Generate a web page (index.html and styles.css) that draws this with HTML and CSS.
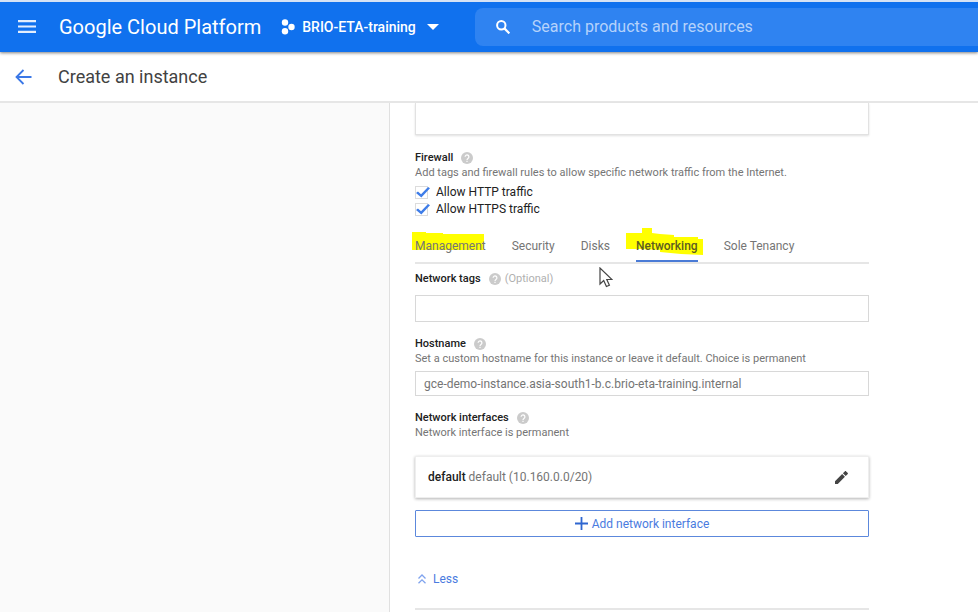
FILE: index.html
```
<!DOCTYPE html>
<html lang="en">
<head>
<meta charset="utf-8">
<meta name="viewport" content="width=device-width, initial-scale=1">
<title>Create an instance</title>
<link rel="stylesheet" href="styles.css">
</head>
<body>
<svg class="defs" aria-hidden="true">
  <symbol id="help" viewBox="0 0 24 24">
    <circle cx="12" cy="12" r="12" fill="#cbcbcb"/>
    <path d="M8.2 9.6a3.8 3.8 0 1 1 6 3.1c-1.400 1-2.200 1.500-2.200 3.100M12 17.400v2.400" fill="none" stroke="#fff" stroke-width="2.400"/>
  </symbol>
</svg>
<header class="topbar">
  <button class="icon-button menu" type="button" aria-label="Navigation menu">
    <svg width="20" height="14" viewBox="0 0 20 14"><path d="M1 1.200h18M1 6.500h18M1 11.800h18" stroke="#e3eefd" stroke-width="2.200"/></svg>
  </button>
  <a class="brand" href="#">Google Cloud Platform</a>
  <button class="project" type="button">
    <svg width="14" height="16" viewBox="0 0 14 16" fill="#fff"><circle cx="4" cy="3.500" r="3.200"/><circle cx="10.500" cy="8" r="3.200"/><circle cx="4" cy="12.300" r="3.200"/></svg>
    <span>BRIO-ETA-training</span>
    <svg class="caret" width="12" height="6" viewBox="0 0 12 6"><path d="M0 0h12L6 6z" fill="#fff"/></svg>
  </button>
  <form class="search">
    <svg width="14" height="14" viewBox="0 0 14 14" fill="none" stroke="#fff"><circle cx="5.300" cy="5.300" r="4.200" stroke-width="2"/><path d="M8.400 8.400l5 5" stroke-width="2.200"/></svg>
    <input type="search" aria-label="Search products and resources" placeholder="Search products and resources">
  </form>
</header>
<div class="titlebar">
  <button class="icon-button back" type="button" aria-label="Back">
    <svg width="17" height="16" viewBox="0 0 17 16" fill="none" stroke="#3b78e7" stroke-width="1.800"><path d="M16.500 8H1.500M8.500 1l-7 7 7 7"/></svg>
  </button>
  <h1>Create an instance</h1>
</div>
<div class="layout">
  <aside class="side"></aside>
  <main class="form">
    <div class="panel"></div>

    <section class="firewall">
      <h2>Firewall <svg class="help"><use href="#help"/></svg></h2>
      <p class="hint">Add tags and firewall rules to allow specific network traffic from the Internet.</p>
      <label class="check"><input type="checkbox" checked><span>Allow HTTP traffic</span></label>
      <label class="check"><input type="checkbox" checked><span>Allow HTTPS traffic</span></label>
    </section>

    <nav class="tabs">
      <a href="#">
        <svg class="mark mark-left" width="72" height="20" viewBox="0 0 72 20"><path d="M0 0h14v1h17v1h41v16H0z" fill="#ff0"/></svg>
        <span>Management</span>
      </a>
      <a href="#"><span>Security</span></a>
      <a href="#"><span>Disks</span></a>
      <a class="active" href="#">
        <svg class="mark mark-right" width="78" height="28" viewBox="0 0 78 28"><path d="M0 5h16V0h10v5l8 1 14 1v2h24v2h5v16l-22-1-21-2v-2l-20-1H0z" fill="#ff0"/></svg>
        <span>Networking</span>
      </a>
      <a href="#"><span>Sole Tenancy</span></a>
      <svg class="pointer" width="14" height="21" viewBox="0 0 14 21"><path d="M1 1v16l3.700-3.500 2.700 6 3-1.300-2.600-5.700H13z" fill="#fff" stroke="#444" stroke-width="1.200"/></svg>
    </nav>

    <section class="tags">
      <label class="title" for="tags">Network tags <svg class="help"><use href="#help"/></svg><span class="optional">(Optional)</span></label>
      <input class="field" id="tags" type="text">
    </section>

    <section class="host">
      <label class="title" for="host">Hostname <svg class="help"><use href="#help"/></svg></label>
      <p class="hint">Set a custom hostname for this instance or leave it default. Choice is permanent</p>
      <input class="field" id="host" type="text" placeholder="gce-demo-instance.asia-south1-b.c.brio-eta-training.internal">
    </section>

    <section class="interfaces">
      <h2>Network interfaces <svg class="help"><use href="#help"/></svg></h2>
      <p class="hint">Network interface is permanent</p>
      <div class="card">
        <p><b>default</b> default (10.160.0.0/20)</p>
        <button class="icon-button" type="button" aria-label="Edit network interface">
          <svg width="13" height="13" viewBox="0 0 14 14" fill="#444"><path d="M0 11v3h3l7.700-7.700-3-3zM8.500 2.500l3 3 2-2c.6-.6.6-1 0-1.500L12 .5c-.5-.6-1-.6-1.500 0z"/></svg>
        </button>
      </div>
      <button class="add" type="button">
        <svg width="13" height="13" viewBox="0 0 13 13"><path d="M6.500 0v13M0 6.500h13" stroke="#2f66d0" stroke-width="1.800"/></svg>
        <span>Add network interface</span>
      </button>
    </section>

    <button class="less" type="button">
      <svg width="8" height="10" viewBox="0 0 8 10" fill="none" stroke="#7fa3ee" stroke-width="1.300"><path d="M.5 4.500L4 1l3.500 3.500M.5 9.300L4 5.800l3.500 3.500"/></svg>
      <span>Less</span>
    </button>
    <hr>
  </main>
</div>
</body>
</html>
```
FILE: styles.css
```
* { box-sizing: border-box; }
body {
  margin: 0;
  min-height: 100vh;
  display: flex;
  flex-direction: column;
  overflow: hidden;
  background: #fff;
  color: #212121;
  font: 12px/14px Roboto, "Liberation Sans", sans-serif;
}
h1, h2, p { margin: 0; }
a { color: inherit; text-decoration: none; }
button { padding: 0; border: 0; background: none; font: inherit; color: inherit; }
svg { display: block; flex: none; }
.defs { position: absolute; width: 0; height: 0; }

.topbar {
  position: relative;
  display: flex;
  align-items: center;
  height: 52px;
  padding-left: 17px;
  border-top: 2px solid #d5e2f5;
  background: #1071ee;
  color: #fff;
  box-shadow: 0 1px 3px rgba(0, 0, 0, .5);
}
.icon-button { display: flex; align-items: center; }
.menu { width: 42px; }
.brand { font-size: 20px; line-height: 24px; }
.project { display: flex; align-items: center; gap: 7px; margin-left: 20px; font-size: 14px; font-weight: 500; line-height: 20px; }
.caret { margin-left: 4px; }
.search {
  flex: 1;
  display: flex;
  align-items: center;
  gap: 22px;
  height: 38px;
  margin-left: 36px;
  padding-left: 21px;
  border-radius: 8px 0 0 8px;
  background: #2f83f1;
}
.search input { flex: 1; min-width: 0; padding: 0; border: 0; outline: 0; background: none; color: #fff; font: 16px/20px Roboto, sans-serif; }
.search input::placeholder { color: #b5d2fb; opacity: 1; }

.titlebar { display: flex; align-items: center; height: 51px; padding-left: 15px; border-bottom: 2px solid #e6e6e6; }
.back { width: 43px; }
h1 { font-size: 18px; line-height: 24px; font-weight: 400; color: #424242; }

.layout { flex: 1; display: flex; }
.side { flex: 0 0 390px; border-right: 1px solid #e0e0e0; background: #fafafa; }
.form { flex: 0 1 504px; padding: 0 25px; }
.panel { height: 32px; border: 1px solid #e2e2e2; border-top: 0; box-shadow: 0 1px 2px rgba(0, 0, 0, .12); }

h2, .title { display: flex; align-items: center; gap: 8px; font-size: 11px; line-height: 14px; font-weight: 500; color: #212121; }
.help { width: 12px; height: 12px; }
.optional { margin-left: -4px; font-weight: 400; color: #b0b0b0; }
.hint { font-size: 11px; line-height: 16px; color: #757575; }

.firewall { padding-top: 16px; }
.check { display: flex; align-items: center; gap: 8px; line-height: 17px; }
.firewall .hint { margin-bottom: 3px; }
.check input {
  appearance: none;
  width: 13px;
  height: 13px;
  margin: 0;
  border: 1px solid #dcdcdc;
  display: grid;
}
.check input:checked::before {
  content: "";
  width: 14px;
  height: 11px;
  background: #3f7de8;
  clip-path: polygon(0 55%, 14% 40%, 36% 65%, 86% 0, 100% 12%, 38% 95%);
}

.tabs { position: relative; display: flex; gap: 26px; height: 30px; margin-top: 16px; border-bottom: 2px solid #e6e6e6; color: #757575; line-height: 24px; }
.tabs a { position: relative; height: 28px; }
.tabs span { position: relative; }
.tabs .active { color: #5c5c20; font-weight: 500; border-bottom: 2px solid #4a7bd6; }
.mark { position: absolute; }
.mark-left { left: -3px; top: -2px; }
.mark-right { left: -10px; top: -6px; }
.pointer { position: absolute; left: 184px; top: 33px; }

.tags { padding-top: 8px; }
.field {
  display: block;
  width: 100%;
  height: 27px;
  padding: 0 8px;
  border: 1px solid #d8d8d8;
  background: #fff;
  font: 12px/16px Roboto, sans-serif;
  color: #212121;
}
.field::placeholder { color: #757575; opacity: 1; }
.tags .field { margin-top: 9px; }
.host { padding-top: 15px; }
.host .field { height: 25px; margin-top: 4px; }
.interfaces { padding-top: 15px; }
.card {
  display: flex;
  align-items: center;
  justify-content: space-between;
  height: 42px;
  margin-top: 15px;
  padding: 0 20px 0 12px;
  border: 1px solid #eee;
  box-shadow: 0 1px 3px rgba(0, 0, 0, .3);
  color: #757575;
}
.card b { font-weight: 500; color: #212121; }
.add {
  display: flex;
  align-items: center;
  justify-content: center;
  gap: 4px;
  width: 100%;
  height: 27px;
  margin-top: 12px;
  border: 1px solid #5c88dc;
  border-radius: 1px;
  color: #4a7be0;
}
.less { display: flex; align-items: center; gap: 7px; margin: 35px 0 0 3px; color: #4a7be0; }
hr { height: 2px; margin: 22px 0 0; border: 0; background: #e6e6e6; }
```
